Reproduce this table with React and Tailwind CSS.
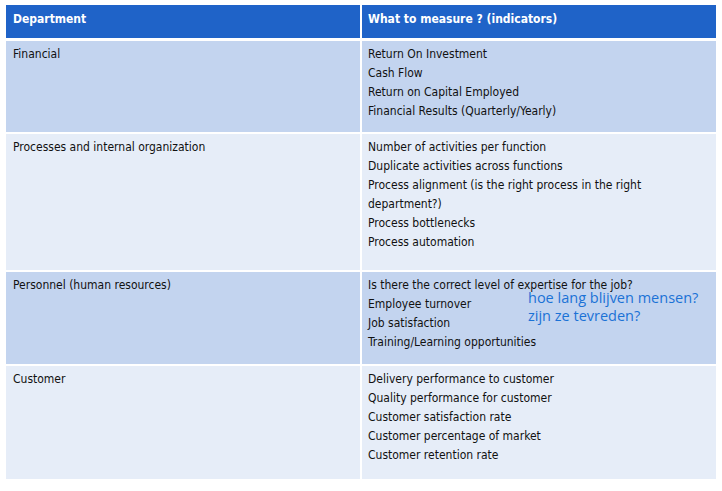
const rows = [
  {
    dept: "Financial",
    items: [
      "Return On Investment",
      "Cash Flow",
      "Return on Capital Employed",
      "Financial Results (Quarterly/Yearly)",
    ],
    h: "h-[91px]",
    bg: "bg-[#c3d4ef]",
  },
  {
    dept: "Processes and internal organization",
    items: [
      "Number of activities per function",
      "Duplicate activities across functions",
      "Process alignment (is the right process in the right department?)",
      "Process bottlenecks",
      "Process automation",
    ],
    h: "h-[136px]",
    bg: "bg-[#e6edf8]",
  },
  {
    dept: "Personnel (human resources)",
    items: [
      "Is there the correct level of expertise for the job?",
      "Employee turnover",
      "Job satisfaction",
      "Training/Learning opportunities",
    ],
    h: "h-[92px]",
    bg: "bg-[#c3d4ef]",
    note: true,
  },
  {
    dept: "Customer",
    items: [
      "Delivery performance to customer",
      "Quality performance for customer",
      "Customer satisfaction rate",
      "Customer percentage of market",
      "Customer retention rate",
    ],
    h: "h-[113px]",
    bg: "bg-[#e6edf8]",
  },
];

export default function App() {
  return (
    <div className="w-[722px] h-[491px] bg-white pt-[5px] pl-[6px] font-['Liberation_Sans_Narrow','DejaVu_Sans_Condensed',sans-serif] text-[12px] leading-[19px] text-[#111111]">
      <div className="grid grid-cols-[354px_354px] gap-x-[2px] w-[710px]">
        <div className="h-[33px] bg-[#1f63c8] px-[7px] pt-[5px] text-white font-bold">Department</div>
        <div className="h-[33px] bg-[#1f63c8] px-[6px] pt-[5px] text-white font-bold">What to measure ? (indicators)</div>
      </div>
      <div className="flex flex-col gap-y-[2px] mt-[3px] w-[710px]">
        {rows.map((r) => (
          <div key={r.dept} className={`grid grid-cols-[354px_354px] gap-x-[2px] ${r.h}`}>
            <div className={`${r.bg} px-[7px] pt-[4px]`}>{r.dept}</div>
            <div className={`${r.bg} pl-[6px] pr-[68px] pt-[4px] relative`}>
              {r.items.map((it) => (
                <div key={it}>{it}</div>
              ))}
              {r.note && (
                <div className="absolute left-[166px] top-[17px] font-['Open_Sans',sans-serif] text-[14.5px] leading-[18px] text-[#1b72d6]">
                  <div>hoe lang blijven mensen?</div>
                  <div>zijn ze tevreden?</div>
                </div>
              )}
            </div>
          </div>
        ))}
      </div>
    </div>
  );
}
